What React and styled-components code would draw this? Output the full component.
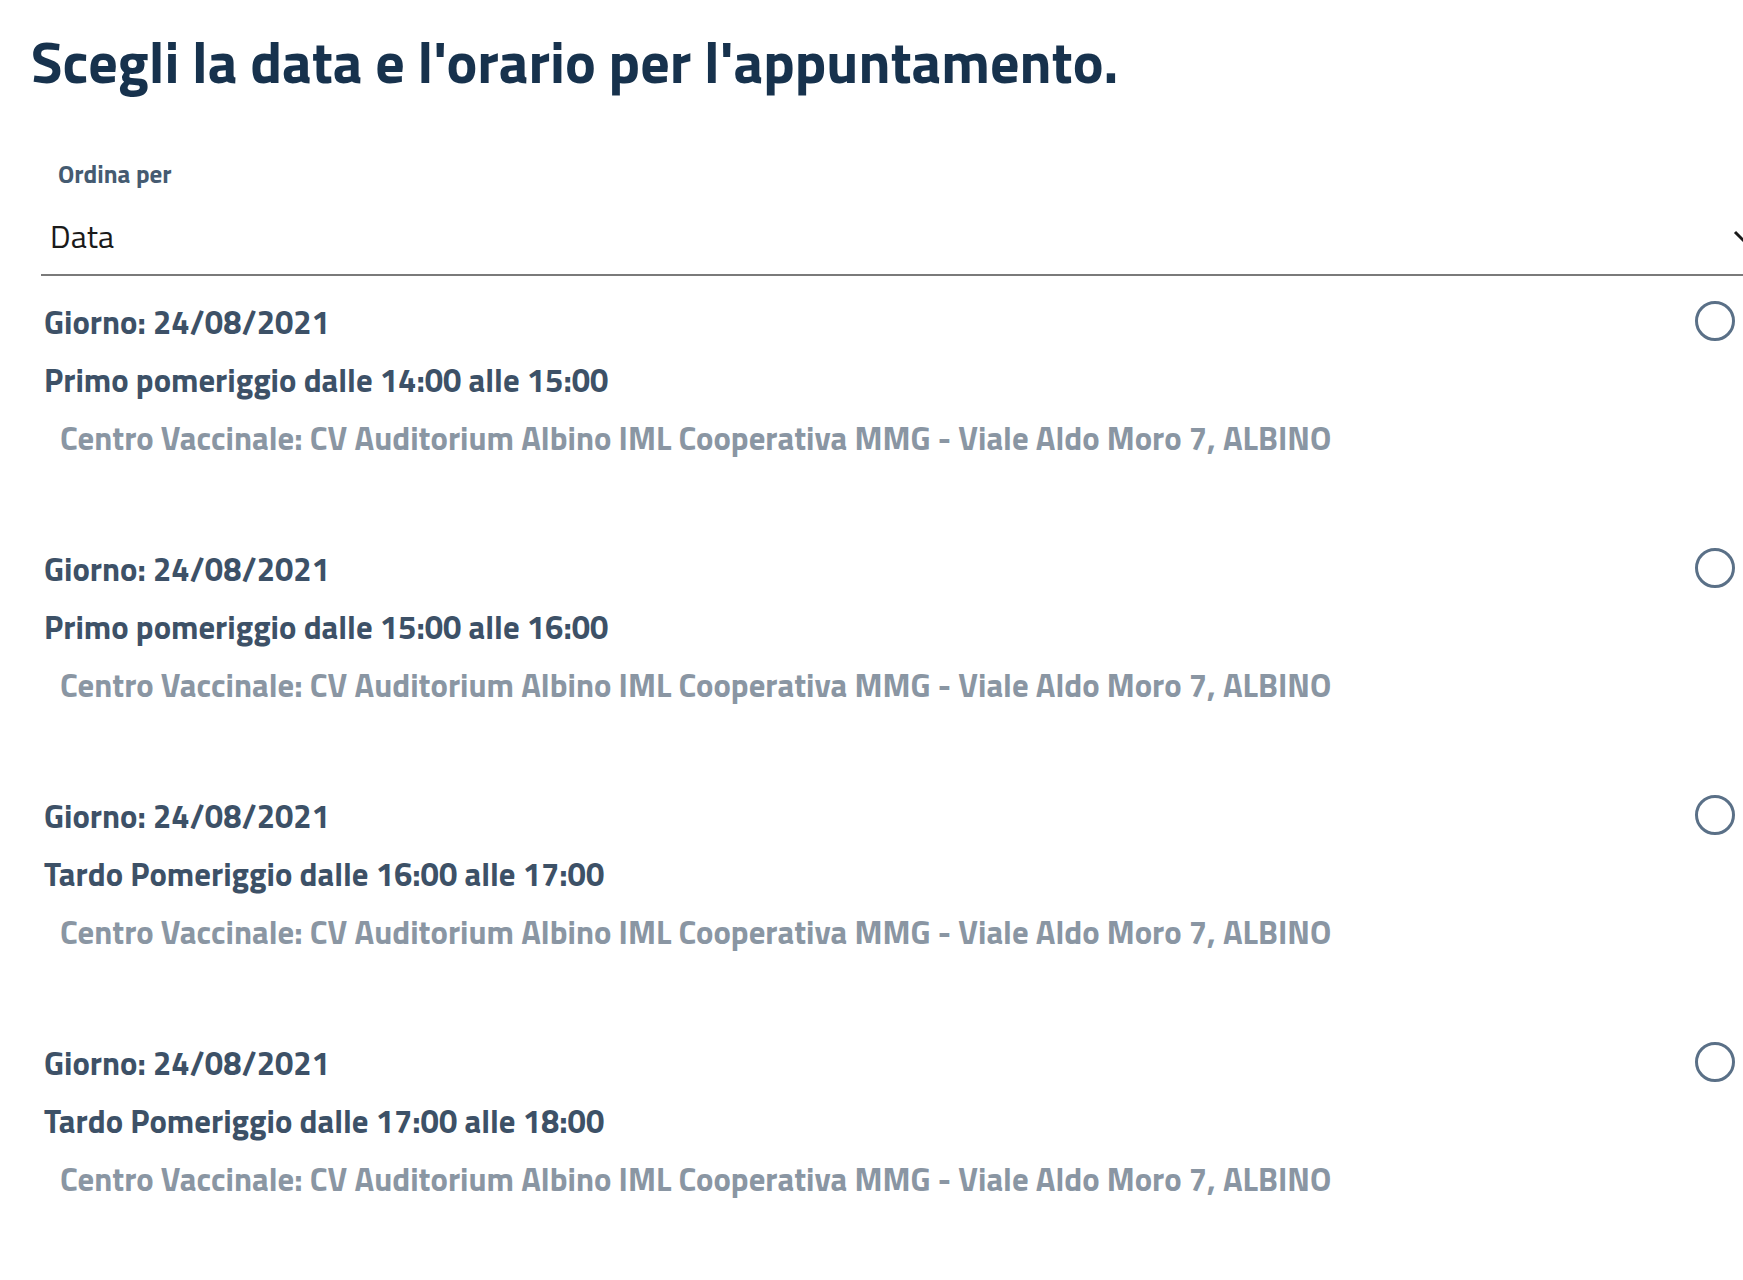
import React, { useState } from "react";
import styled, { createGlobalStyle } from "styled-components";

const GlobalStyle = createGlobalStyle`
  body {
    margin: 0;
    background: #ffffff;
    overflow-x: hidden;
    font-family: "Titillium Web", "Liberation Sans Narrow", "Liberation Sans", Arial, sans-serif;
  }
`;

const Page = styled.div`
  padding: 26px 8px 40px 31px;
  overflow: hidden;
`;

const Title = styled.h1`
  margin: 0;
  font-size: 58px;
  line-height: 72px;
  font-weight: 700;
  color: #17324d;
`;

const SortField = styled.div`
  margin: 61px -40px 0 10px;
`;

const SortLabel = styled.label`
  display: block;
  padding-left: 17px;
  font-size: 25px;
  line-height: 30px;
  font-weight: 700;
  color: #455b71;
`;

const SelectRow = styled.div`
  display: flex;
  align-items: center;
  justify-content: space-between;
  margin-top: 27px;
  padding: 0 18px 18px 9px;
  border-bottom: 2px solid #7a7a7a;
`;

const SelectValue = styled.span`
  font-size: 32px;
  line-height: 40px;
  font-weight: 400;
  color: #1a1a1a;
`;

const Chevron = styled.svg`
  width: 20px;
  height: 20px;
  margin-right: 4px;
`;

const SlotList = styled.div`
  margin-top: 17px;
  padding-left: 13px;
`;

const Slot = styled.div`
  display: flex;
  justify-content: space-between;
  align-items: flex-start;
  padding-bottom: 73px;
  cursor: pointer;
`;

const SlotText = styled.div`
  display: flex;
  flex-direction: column;
`;

const Line = styled.span`
  font-size: 32.7px;
  line-height: 58px;
  font-weight: 700;
  color: ${(p) => (p.muted ? "#8a96a3" : "#3d5167")};
  padding-left: ${(p) => (p.muted ? "16px" : "0")};
`;

const Radio = styled.span`
  box-sizing: border-box;
  flex-shrink: 0;
  width: 40px;
  height: 40px;
  margin-top: 8px;
  border-radius: 50%;
  border: 3.5px solid #5a7087;
  display: flex;
  align-items: center;
  justify-content: center;
  &::after {
    content: "";
    width: 20px;
    height: 20px;
    border-radius: 50%;
    background: ${(p) => (p.checked ? "#5a7087" : "transparent")};
  }
`;

const place = "Centro Vaccinale: CV Auditorium Albino IML Cooperativa MMG - Viale Aldo Moro 7, ALBINO";

const slots = [
  { day: "24/08/2021", band: "Primo pomeriggio dalle 14:00 alle 15:00" },
  { day: "24/08/2021", band: "Primo pomeriggio dalle 15:00 alle 16:00" },
  { day: "24/08/2021", band: "Tardo Pomeriggio dalle 16:00 alle 17:00" },
  { day: "24/08/2021", band: "Tardo Pomeriggio dalle 17:00 alle 18:00" },
];

function App() {
  const [selected, setSelected] = useState(null);

  return (
    <>
      <GlobalStyle />
      <Page>
        <Title>Scegli la data e l'orario per l'appuntamento.</Title>
        <SortField>
          <SortLabel>Ordina per</SortLabel>
          <SelectRow>
            <SelectValue>Data</SelectValue>
            <Chevron viewBox="0 0 20 20">
              <path d="M2 6l8 8 8-8" fill="none" stroke="#1a1a1a" strokeWidth="3" />
            </Chevron>
          </SelectRow>
        </SortField>
        <SlotList>
          {slots.map((slot, i) => (
            <Slot key={slot.band} onClick={() => setSelected(i)}>
              <SlotText>
                <Line>Giorno: {slot.day}</Line>
                <Line>{slot.band}</Line>
                <Line muted>{place}</Line>
              </SlotText>
              <Radio checked={selected === i} />
            </Slot>
          ))}
        </SlotList>
      </Page>
    </>
  );
}

export default App;
